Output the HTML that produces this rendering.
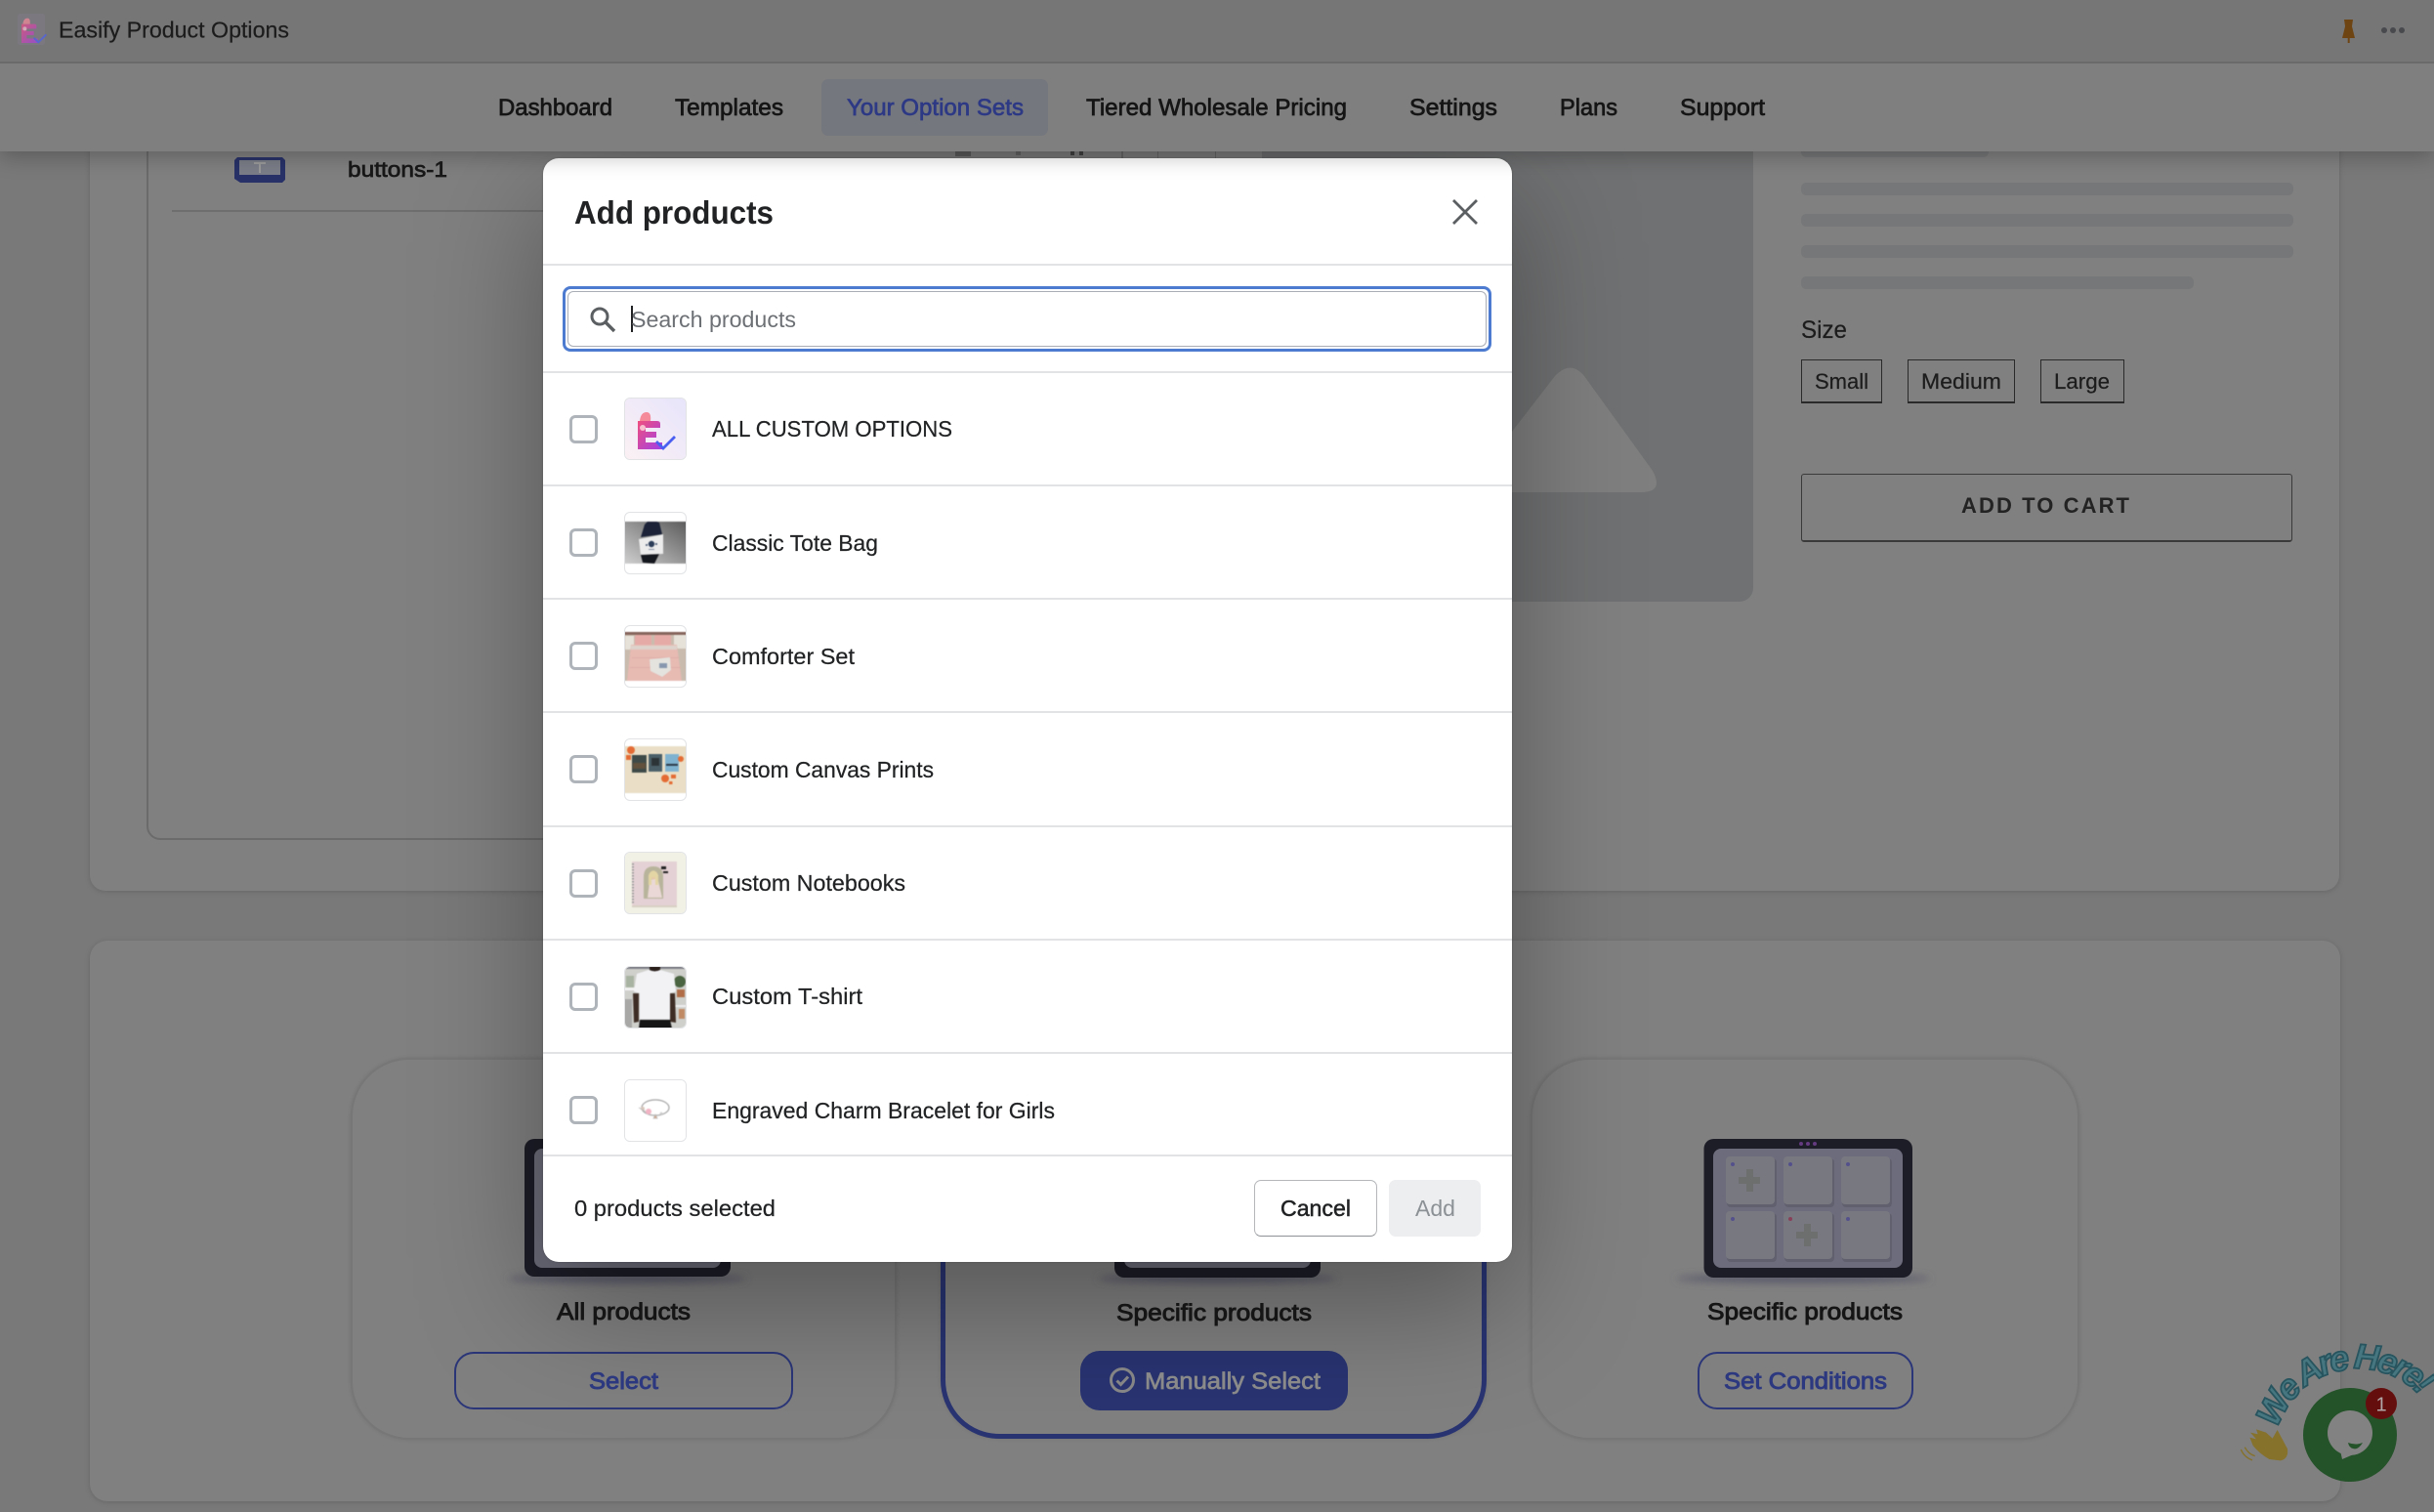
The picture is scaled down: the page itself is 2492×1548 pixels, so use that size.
<!DOCTYPE html>
<html lang="en"><head><meta charset="utf-8"><title>Easify Product Options</title>
<style>
html,body{margin:0;padding:0;width:2492px;height:1548px;overflow:hidden;background:#797979;font-family:"Liberation Sans",sans-serif}
div{position:absolute;box-sizing:border-box}
svg{position:absolute;overflow:visible}
.skel{left:1844px;width:504px;height:13px;background:#767778;border-radius:5px}
.sub{border:2px solid #777;border-radius:60px;background:#808080;box-shadow:0 0 4px rgba(0,0,0,.1)}
.opt{border:1px solid #2a2a2a;border-bottom-width:2px;top:368px;height:45px}
.line{left:0;width:992px;height:2px;background:#e1e3e5}
.cb{left:27px;width:29px;height:29px;border:3.5px solid #aeb4b9;border-radius:6px;background:#fff}
.th{left:83px;width:64px;height:64px;border:1px solid #e1e3e5;border-radius:6px;background:#fff;overflow:hidden}
.th svg{left:-1px;top:-1px;filter:blur(.4px)}
.obtn{top:1384px;height:59px;border:2px solid #2b3679;border-radius:20px}
.t{font-family:"Liberation Sans",sans-serif}
.m{stroke:currentColor;stroke-width:.7;paint-order:stroke}
.b{stroke:currentColor;stroke-width:.9;paint-order:stroke}
.r{stroke:currentColor;stroke-width:.22;paint-order:stroke}
</style></head><body>

<!-- page behind overlay -->
<div style="left:92px;top:100px;width:2303px;height:812px;background:#808080;border-radius:16px;box-shadow:0 1px 6px rgba(0,0,0,.15)"></div>
<div style="left:150px;top:100px;width:1000px;height:760px;border:2px solid #6b6b6b;border-radius:14px"></div>
<div style="left:176px;top:215px;width:500px;height:2px;background:#6e6e6e"></div>
<svg style="left:238px;top:159px" width="56" height="30" viewBox="0 0 56 30"><path d="M5 2h46l3 3v20l-3 3H8l-6-4V5z" fill="#283268"/><rect x="7" y="5" width="42" height="15" fill="#7b7d88"/><path d="M22 7h12v2h-5v9h-2V9h-5z" fill="#9a9a9a"/></svg>
<div style="left:978px;top:150px;width:16px;height:10px;background:#5e5e5e"></div>
<div style="left:1040px;top:152px;width:5px;height:7px;background:#666"></div>
<div style="left:1096px;top:152px;width:4px;height:7px;background:#444"></div>
<div style="left:1105px;top:152px;width:4px;height:7px;background:#444"></div>
<div style="left:1185px;top:150px;width:1px;height:12px;background:#6a6a6a"></div>
<div style="left:1244px;top:150px;width:1px;height:12px;background:#6a6a6a"></div>
<div style="left:1292px;top:100px;width:503px;height:516px;background:#707172;border-radius:0 0 14px 0"></div>
<svg style="left:1292px;top:100px" width="503" height="516" viewBox="1292 100 503 516"><path d="M1500 504 L1592 385 Q1608 368 1622 385 L1692 482 Q1704 504 1680 504Z" fill="#7f7f7f"/></svg>

<div class="skel" style="top:148px;width:192px"></div>
<div class="skel" style="top:187px"></div>
<div class="skel" style="top:219px"></div>
<div class="skel" style="top:251px"></div>
<div class="skel" style="top:283px;width:402px"></div>
<div class="opt" style="left:1844px;width:83px"></div>
<div class="opt" style="left:1953px;width:110px"></div>
<div class="opt" style="left:2089px;width:86px"></div>
<div style="left:1844px;top:485px;width:503px;height:70px;border:1.5px solid #3a3a3a;border-bottom-width:2px;border-radius:3px"></div>

<div style="left:92px;top:963px;width:2304px;height:574px;background:#808080;border-radius:18px;box-shadow:0 1px 6px rgba(0,0,0,.15)"></div>
<div class="sub" style="left:359px;top:1083px;width:559px;height:391px"></div>
<div class="sub" style="left:963px;top:1084px;width:559px;height:389px;border:5px solid #293472"></div>
<div class="sub" style="left:1567px;top:1083px;width:562px;height:391px"></div>

<svg style="left:0;top:0" width="2492" height="1548" viewBox="0 0 2492 1548">
<defs><filter id="b" x="-20%" y="-200%" width="140%" height="500%"><feGaussianBlur stdDeviation="4"/></filter>
<linearGradient id="eg" x1="0" y1="0" x2="1" y2="1"><stop offset="0" stop-color="#ef4f7e"/><stop offset="1" stop-color="#a23fe6"/></linearGradient>
<linearGradient id="lg" x1="1" y1="0" x2="0" y2="1"><stop offset="0" stop-color="#e7e4fb"/><stop offset="1" stop-color="#fbf1f4"/></linearGradient>
<linearGradient id="tg" x1="1" y1="0" x2="0" y2="1"><stop offset="0" stop-color="#5c5c5c"/><stop offset="1" stop-color="#cfcfcf"/></linearGradient>
<g id="logo"><path d="M14 24 h20 q3 0 3 3 v4 h-15 v4 h11 v6 h-11 v5 h17 v7 h-25z" fill="url(#eg)"/><path d="M33 45 l7 7 l12 -12" fill="none" stroke="#4a5ff0" stroke-width="2.8"/><path d="M16 24 q1 -9 7 -9 q5 0 4 9z" fill="#f58a9a"/><circle cx="19" cy="31" r="3" fill="#f8c0cf"/></g>
</defs>
<ellipse cx="1846" cy="1309" rx="130" ry="5" fill="#5c5c6c" filter="url(#b)"/>
<ellipse cx="642" cy="1309" rx="122" ry="5" fill="#5c5c6c" filter="url(#b)"/>
<ellipse cx="1246" cy="1309" rx="122" ry="5" fill="#5c5c6c" filter="url(#b)"/>
</svg>

<!-- left tablet -->
<div style="left:537px;top:1166px;width:211px;height:141px;background:#1d1d28;border-radius:10px"></div>
<div style="left:547px;top:1176px;width:191px;height:122px;background:#6c6c7a;border-radius:8px"></div>
<!-- mid tablet -->
<div style="left:1141px;top:1166px;width:211px;height:142px;background:#1d1d28;border-radius:10px"></div>
<div style="left:1151px;top:1176px;width:191px;height:122px;background:#6c6c7a;border-radius:8px"></div>

<!-- right tablet -->
<svg style="left:1740px;top:1160px" width="224" height="154" viewBox="1740 1160 224 154">
<rect x="1744.5" y="1166" width="213.5" height="142" rx="10" fill="#1d1d28"/>
<rect x="1754" y="1176" width="194" height="122" rx="8" fill="#6c6c7c"/>
<g fill="#60606e">
<rect x="1768" y="1186" width="51" height="50" rx="4"/><rect x="1827" y="1186" width="51" height="50" rx="4"/><rect x="1886" y="1186" width="51" height="50" rx="4"/>
<rect x="1768" y="1242" width="51" height="50" rx="4"/><rect x="1827" y="1242" width="51" height="50" rx="4"/><rect x="1886" y="1242" width="51" height="50" rx="4"/></g>
<g fill="#787880">
<rect x="1767" y="1184" width="50" height="49" rx="4"/><rect x="1826" y="1184" width="50" height="49" rx="4"/><rect x="1885" y="1184" width="50" height="49" rx="4"/>
<rect x="1767" y="1240" width="50" height="49" rx="4"/><rect x="1826" y="1240" width="50" height="49" rx="4"/><rect x="1885" y="1240" width="50" height="49" rx="4"/></g>
<g fill="#6d6e6e"><path d="M1788 1197h7v8h7v7h-7v8h-7v-8h-8v-7h8z"/><path d="M1847 1253h7v8h7v7h-7v8h-7v-8h-8v-7h8z"/></g>
<g fill="#54508c"><circle cx="1774" cy="1192" r="2"/><circle cx="1833" cy="1192" r="2"/><circle cx="1892" cy="1192" r="2"/><circle cx="1774" cy="1248" r="2"/><circle cx="1892" cy="1248" r="2"/></g>
<circle cx="1833" cy="1248" r="2" fill="#883f58"/>
<g fill="#643a80"><circle cx="1844" cy="1171" r="2"/><circle cx="1851" cy="1171" r="2"/><circle cx="1858" cy="1171" r="2"/></g>
</svg>

<div class="obtn" style="left:465px;width:347px"></div>
<div style="left:1106px;top:1383px;width:274px;height:61px;background:#293472;border-radius:20px"></div>
<svg style="left:1134px;top:1398px" width="30" height="30" viewBox="0 0 30 30"><circle cx="15" cy="15" r="11.5" fill="none" stroke="#8a8a8a" stroke-width="3"/><path d="M9.5 15.5l4 4 7.5-8" fill="none" stroke="#8a8a8a" stroke-width="3"/></svg>
<div class="obtn" style="left:1738px;width:221px"></div>

<!-- chat widget -->
<svg style="left:2290px;top:1360px" width="202" height="188" viewBox="2290 1360 202 188">
<g transform="translate(2260 1340) scale(.3333)">
<path d="M215 372 L246 430 Q250 460 225 466 L190 462 Q160 445 140 420 L130 395 L150 400 L132 380 L155 385 L150 370 L180 380 L200 398 Z" fill="#86722a"/>
<path d="M103 432 Q112 455 138 465 M115 425 Q125 445 146 452" fill="none" stroke="#86722a" stroke-width="4"/>
</g>
<circle cx="2406" cy="1469" r="48" fill="#245229"/>
<circle cx="2406" cy="1467" r="23" fill="#828282"/>
<path d="M2396 1485 L2398 1494 L2412 1488Z" fill="#828282"/>
<path d="M2404 1477 Q2412 1480 2419 1477 Q2414 1485 2409 1483 Q2405 1482 2404 1477Z" fill="#245229"/>
<circle cx="2438" cy="1437" r="16" fill="#650e0e"/>
</svg>

<!-- nav -->
<div style="left:0;top:65px;width:2492px;height:90px;background:#7f7f7f;box-shadow:0 4px 22px rgba(0,0,0,.28);z-index:5"></div>
<div style="left:0;top:0;width:2492px;height:65px;background:#767677;border-bottom:2px solid #6a6a6b;z-index:6"></div>
<div style="left:841px;top:81px;width:232px;height:58px;background:#75777e;border-radius:7px;z-index:7"></div>
<svg style="left:18px;top:14px;z-index:7" width="28" height="32" viewBox="8 8 42 48"><rect x="8" y="8" width="42" height="48" rx="4" fill="#7b7880"/><g opacity=".7"><use href="#logo"/></g></svg>
<svg style="left:2394px;top:18px;z-index:7" width="72" height="26" viewBox="0 0 72 26"><path d="M6 2h9l-1 7 3 12H4l3-12z" fill="#6e4512"/><rect x="9.7" y="20" width="2" height="6" fill="#6e4512"/><g fill="#47494d"><circle cx="47" cy="13" r="3"/><circle cx="56" cy="13" r="3"/><circle cx="65" cy="13" r="3"/></g></svg>

<!-- modal -->
<div style="left:556px;top:162px;width:992px;height:1130px;background:#fff;border-radius:16px;box-shadow:0 41px 127px rgba(0,0,0,.34),0 0 2px rgba(0,0,0,.2);overflow:hidden;z-index:4">
  <div class="line" style="top:108px"></div>
  <svg style="left:931px;top:42px" width="26" height="26" viewBox="0 0 26 26"><path d="M1 1L25 25M25 1L1 25" stroke="#5c5f62" stroke-width="2.8" fill="none"/></svg>
  <div style="left:20px;top:131px;width:951px;height:67px;border:3.5px solid #4c7bd0;border-radius:8px"></div>
  <div style="left:25px;top:136px;width:941px;height:57px;border:1.5px solid #a9adb5;border-radius:6px"></div>
  <svg style="left:48px;top:152px" width="26" height="26" viewBox="0 0 26 26"><circle cx="10" cy="10" r="8" fill="none" stroke="#5c5f62" stroke-width="3"/><path d="M16 16l9 9" stroke="#5c5f62" stroke-width="3.4"/></svg>
  <div style="left:90px;top:151px;width:2px;height:27px;background:#202223"></div>
  <div class="line" style="top:218px"></div><div class="line" style="top:334px"></div><div class="line" style="top:450px"></div><div class="line" style="top:566px"></div><div class="line" style="top:683px"></div><div class="line" style="top:799px"></div><div class="line" style="top:915px"></div><div class="line" style="top:1020px"></div>
  <div class="cb" style="top:263px"></div><div class="cb" style="top:379px"></div><div class="cb" style="top:495px"></div><div class="cb" style="top:611px"></div><div class="cb" style="top:728px"></div><div class="cb" style="top:844px"></div><div class="cb" style="top:960px"></div>

  <div class="th" style="top:245px"><svg width="64" height="64" viewBox="0 0 64 64" style="filter:none"><rect width="64" height="64" fill="url(#lg)"/><use href="#logo"/></svg></div>

  <div class="th" style="top:362px"><svg width="64" height="64" viewBox="0 0 64 64"><rect y="10" width="64" height="43" fill="url(#tg)"/><path d="M21 13l3-3h9l3 1 3 12-22 3z" fill="#1c2338"/><path d="M17 44l19-1-5 10-12-1z" fill="#15171e"/><path d="M15 28l25-5v20l-23 1z" fill="#ececec"/><circle cx="28" cy="33" r="3.2" fill="#2c3d5a"/><circle cx="23" cy="34" r="1" fill="#3c4d6a"/><circle cx="33" cy="33" r="1" fill="#3c4d6a"/><rect x="25" y="38" width="6" height="1" fill="#8793a6"/></svg></div>

  <div class="th" style="top:478px"><svg width="64" height="64" viewBox="0 0 64 64"><rect y="7" width="64" height="50" fill="#c9bcae"/><rect y="7" width="64" height="3" fill="#86665c"/><rect x="1" y="11" width="9" height="14" fill="#e6e2da"/><rect x="51" y="10" width="13" height="14" fill="#e6e2da"/><rect x="11" y="10" width="17" height="11" rx="2" fill="#e6aaa6"/><rect x="31" y="10" width="17" height="11" rx="2" fill="#e6aaa6"/><path d="M7 20h47l5 37H3z" fill="#e7bab2"/><path d="M7 21h47v4H7z" fill="#ddd3cc"/><path d="M8 33h48v1H8zM6 43h52v1H6z" fill="#deaea7"/><path d="M26 35l21-2 1 13-9 7-12-6z" fill="#e4e3de"/><rect x="36" y="39" width="8" height="5" fill="#8798ae"/></svg></div>

  <div class="th" style="top:594px"><svg width="64" height="64" viewBox="0 0 64 64"><rect y="8" width="64" height="48" fill="#eadfc6"/><rect x="8" y="17" width="15" height="18" fill="#3e4a48"/><rect x="9" y="25" width="13" height="6" fill="#62513d"/><rect x="25" y="16" width="14" height="18" fill="#4a5f68"/><rect x="28" y="20" width="8" height="8" fill="#2d3438"/><rect x="42" y="16" width="14" height="18" fill="#7fb2cf"/><rect x="43" y="26" width="12" height="2" fill="#2d3a48"/><g fill="#e46c34"><circle cx="7" cy="12" r="4"/><rect x="2" y="17" width="5" height="5"/><circle cx="42" cy="41" r="4"/><circle cx="58" cy="21" r="3"/><rect x="48" y="37" width="5" height="4"/><rect x="46" y="44" width="3.5" height="3"/></g></svg></div>

  <div class="th" style="top:710px"><svg width="64" height="64" viewBox="0 0 64 64"><rect width="64" height="64" fill="#f2f1e6"/><rect x="8" y="10" width="46" height="45" fill="#e4d1d5"/><path d="M8 55h46v2H8z" fill="#d7d0c2"/><path d="M20 48V26q0-11 10-11t10 11v22z" fill="#b8b49c"/><path d="M24 47l2-16q4-6 9-1l4 17z" fill="#ead8d6"/><circle cx="30" cy="24" r="4.5" fill="#e6c9a8"/><path d="M25 24q5-9 10 0v10h-3V26h-4v8h-3z" fill="#e4d6a4"/><path d="M9 12v42" stroke="#999" stroke-dasharray="1.5 1.5" stroke-width="2"/><path d="M38 15h5v3h-5zM40 20h5v2h-5z" fill="#222"/></svg></div>

  <div class="th" style="top:827px"><svg width="64" height="64" viewBox="0 0 64 64" style="filter:blur(.6px)"><rect width="64" height="64" fill="#cfd0cc"/><rect width="64" height="3" fill="#82838a"/><rect y="22" width="11" height="3" fill="#f2f2f2"/><rect x="2" y="10" width="8" height="12" fill="#a9b3a2"/><rect x="0" y="34" width="8" height="30" fill="#a8a8a6"/><circle cx="57" cy="16" r="6" fill="#4a6340"/><rect x="54" y="24" width="8" height="8" fill="#b06d48"/><rect x="52" y="40" width="12" height="2" fill="#efefef"/><rect x="56" y="44" width="6" height="10" fill="#c08a64"/><path d="M26 0h11v4q-5 3-11 0z" fill="#2a1f1b"/><path d="M9 28h6v29l-5 1zM47 28h5l1 30-6-1z" fill="#3e2d24"/><path d="M13 8l12-4q6 3 12 0l14 4 2 18-6 2v27H16V28l-6-2z" fill="#f2f2f5"/><path d="M16 55h31l2 9H15z" fill="#161616"/></svg></div>

  <div class="th" style="top:943px"><svg width="64" height="64" viewBox="0 0 64 64"><rect width="64" height="64" fill="#fff"/><ellipse cx="32" cy="29" rx="14" ry="8" fill="none" stroke="#a5a5a5" stroke-width="1.2"/><circle cx="25" cy="33" r="3" fill="#f2b4c4"/><circle cx="19" cy="30" r="2" fill="#d9c7bb"/><path d="M15 29l7 4M30 40l2-4 2 4z" fill="#d8a88a" stroke="#bbb" stroke-width=".8"/><circle cx="38" cy="35" r="1.4" fill="#ccc"/></svg></div>

  <div style="left:728px;top:1046px;width:126px;height:58px;background:#fff;border:1.5px solid #b4b6b9;border-bottom-color:#8f9296;border-radius:7px"></div>
  <div style="left:866px;top:1046px;width:94px;height:58px;background:#edeef0;border-radius:7px"></div>
</div>

<!-- text layer -->
<svg style="left:0;top:0;z-index:10;pointer-events:none" width="2492" height="1548" viewBox="0 0 2492 1548" class="t" font-family="'Liberation Sans',sans-serif" font-size="23">
<g fill="#1c1c1c">
<text x="60" y="38.5" textLength="236" lengthAdjust="spacingAndGlyphs" font-size="23" color="#1c1c1c" class="r">Easify Product Options</text>
<g font-size="24" fill="#151515" color="#151515" class="m">
<text x="510" y="118" textLength="117" lengthAdjust="spacingAndGlyphs">Dashboard</text>
<text x="691" y="118" textLength="111" lengthAdjust="spacingAndGlyphs">Templates</text>
<text x="1112" y="118" textLength="267" lengthAdjust="spacingAndGlyphs">Tiered Wholesale Pricing</text>
<text x="1443" y="118" textLength="90" lengthAdjust="spacingAndGlyphs">Settings</text>
<text x="1597" y="118" textLength="59" lengthAdjust="spacingAndGlyphs">Plans</text>
<text x="1720" y="118" textLength="87" lengthAdjust="spacingAndGlyphs">Support</text>
</g>
<text x="867" y="118" textLength="181" lengthAdjust="spacingAndGlyphs" font-size="24" fill="#2d3984" color="#2d3984" class="m">Your Option Sets</text>
<text x="356" y="181" textLength="102" lengthAdjust="spacingAndGlyphs" font-size="22" fill="#171717" color="#171717" class="m">buttons-1</text>
<g color="#1c1c1c" class="r">
<text x="1844" y="346" textLength="47" lengthAdjust="spacingAndGlyphs" font-size="25">Size</text>
<text x="1858" y="398" textLength="55" lengthAdjust="spacingAndGlyphs" font-size="22">Small</text>
<text x="1967" y="398" textLength="82" lengthAdjust="spacingAndGlyphs" font-size="22">Medium</text>
<text x="2103" y="398" textLength="57" lengthAdjust="spacingAndGlyphs" font-size="22">Large</text>
</g>
<text x="2008" y="525" textLength="172" lengthAdjust="spacing" font-size="22" font-weight="700" fill="#232323">ADD TO CART</text>
<g font-size="24" fill="#151515" color="#151515" class="b">
<text x="570" y="1351" textLength="137" lengthAdjust="spacingAndGlyphs">All products</text>
<text x="1143" y="1352" textLength="200" lengthAdjust="spacingAndGlyphs">Specific products</text>
<text x="1748" y="1351" textLength="200" lengthAdjust="spacingAndGlyphs">Specific products</text>
</g>
<g font-size="24" fill="#2c387f" color="#2c387f" class="b">
<text x="603" y="1422" textLength="71" lengthAdjust="spacingAndGlyphs">Select</text>
<text x="1765" y="1422" textLength="167" lengthAdjust="spacingAndGlyphs">Set Conditions</text>
</g>
<text x="1172" y="1422" textLength="180" lengthAdjust="spacingAndGlyphs" font-size="24" fill="#8a8a8a" color="#8a8a8a" class="m">Manually Select</text>
</g>
<text x="2438" y="1444.5" font-size="20" fill="#b0a8a8" text-anchor="middle">1</text>
<path id="arc" d="M2332 1463 A 86 86 0 0 1 2492 1450" fill="none"/>
<text font-size="36" font-weight="700" font-style="italic" fill="#46767f" stroke="#27545e" stroke-width="1.8"><textPath href="#arc" textLength="182" lengthAdjust="spacing">We Are Here!</textPath></text>

<g fill="#202223">
<text x="588" y="229" textLength="204" lengthAdjust="spacingAndGlyphs" font-size="33" font-weight="700">Add products</text>
<text x="646" y="335" textLength="169" lengthAdjust="spacingAndGlyphs" font-size="23" fill="#6d7175">Search products</text>
<g color="#202223" class="r">
<text x="729" y="447" textLength="246" lengthAdjust="spacingAndGlyphs">ALL CUSTOM OPTIONS</text>
<text x="729" y="564" textLength="170" lengthAdjust="spacingAndGlyphs">Classic Tote Bag</text>
<text x="729" y="680" textLength="146" lengthAdjust="spacingAndGlyphs">Comforter Set</text>
<text x="729" y="796" textLength="227" lengthAdjust="spacingAndGlyphs">Custom Canvas Prints</text>
<text x="729" y="912" textLength="198" lengthAdjust="spacingAndGlyphs">Custom Notebooks</text>
<text x="729" y="1028" textLength="154" lengthAdjust="spacingAndGlyphs">Custom T-shirt</text>
<text x="729" y="1145" textLength="351" lengthAdjust="spacingAndGlyphs">Engraved Charm Bracelet for Girls</text>
<text x="588" y="1245" textLength="206" lengthAdjust="spacingAndGlyphs">0 products selected</text>
</g>
<text x="1311" y="1245" textLength="72" lengthAdjust="spacingAndGlyphs" color="#202223" class="m" style="stroke-width:.5">Cancel</text>
<text x="1449" y="1245" textLength="41" lengthAdjust="spacingAndGlyphs" fill="#8c9196">Add</text>
</g>
</svg>
</body></html>
